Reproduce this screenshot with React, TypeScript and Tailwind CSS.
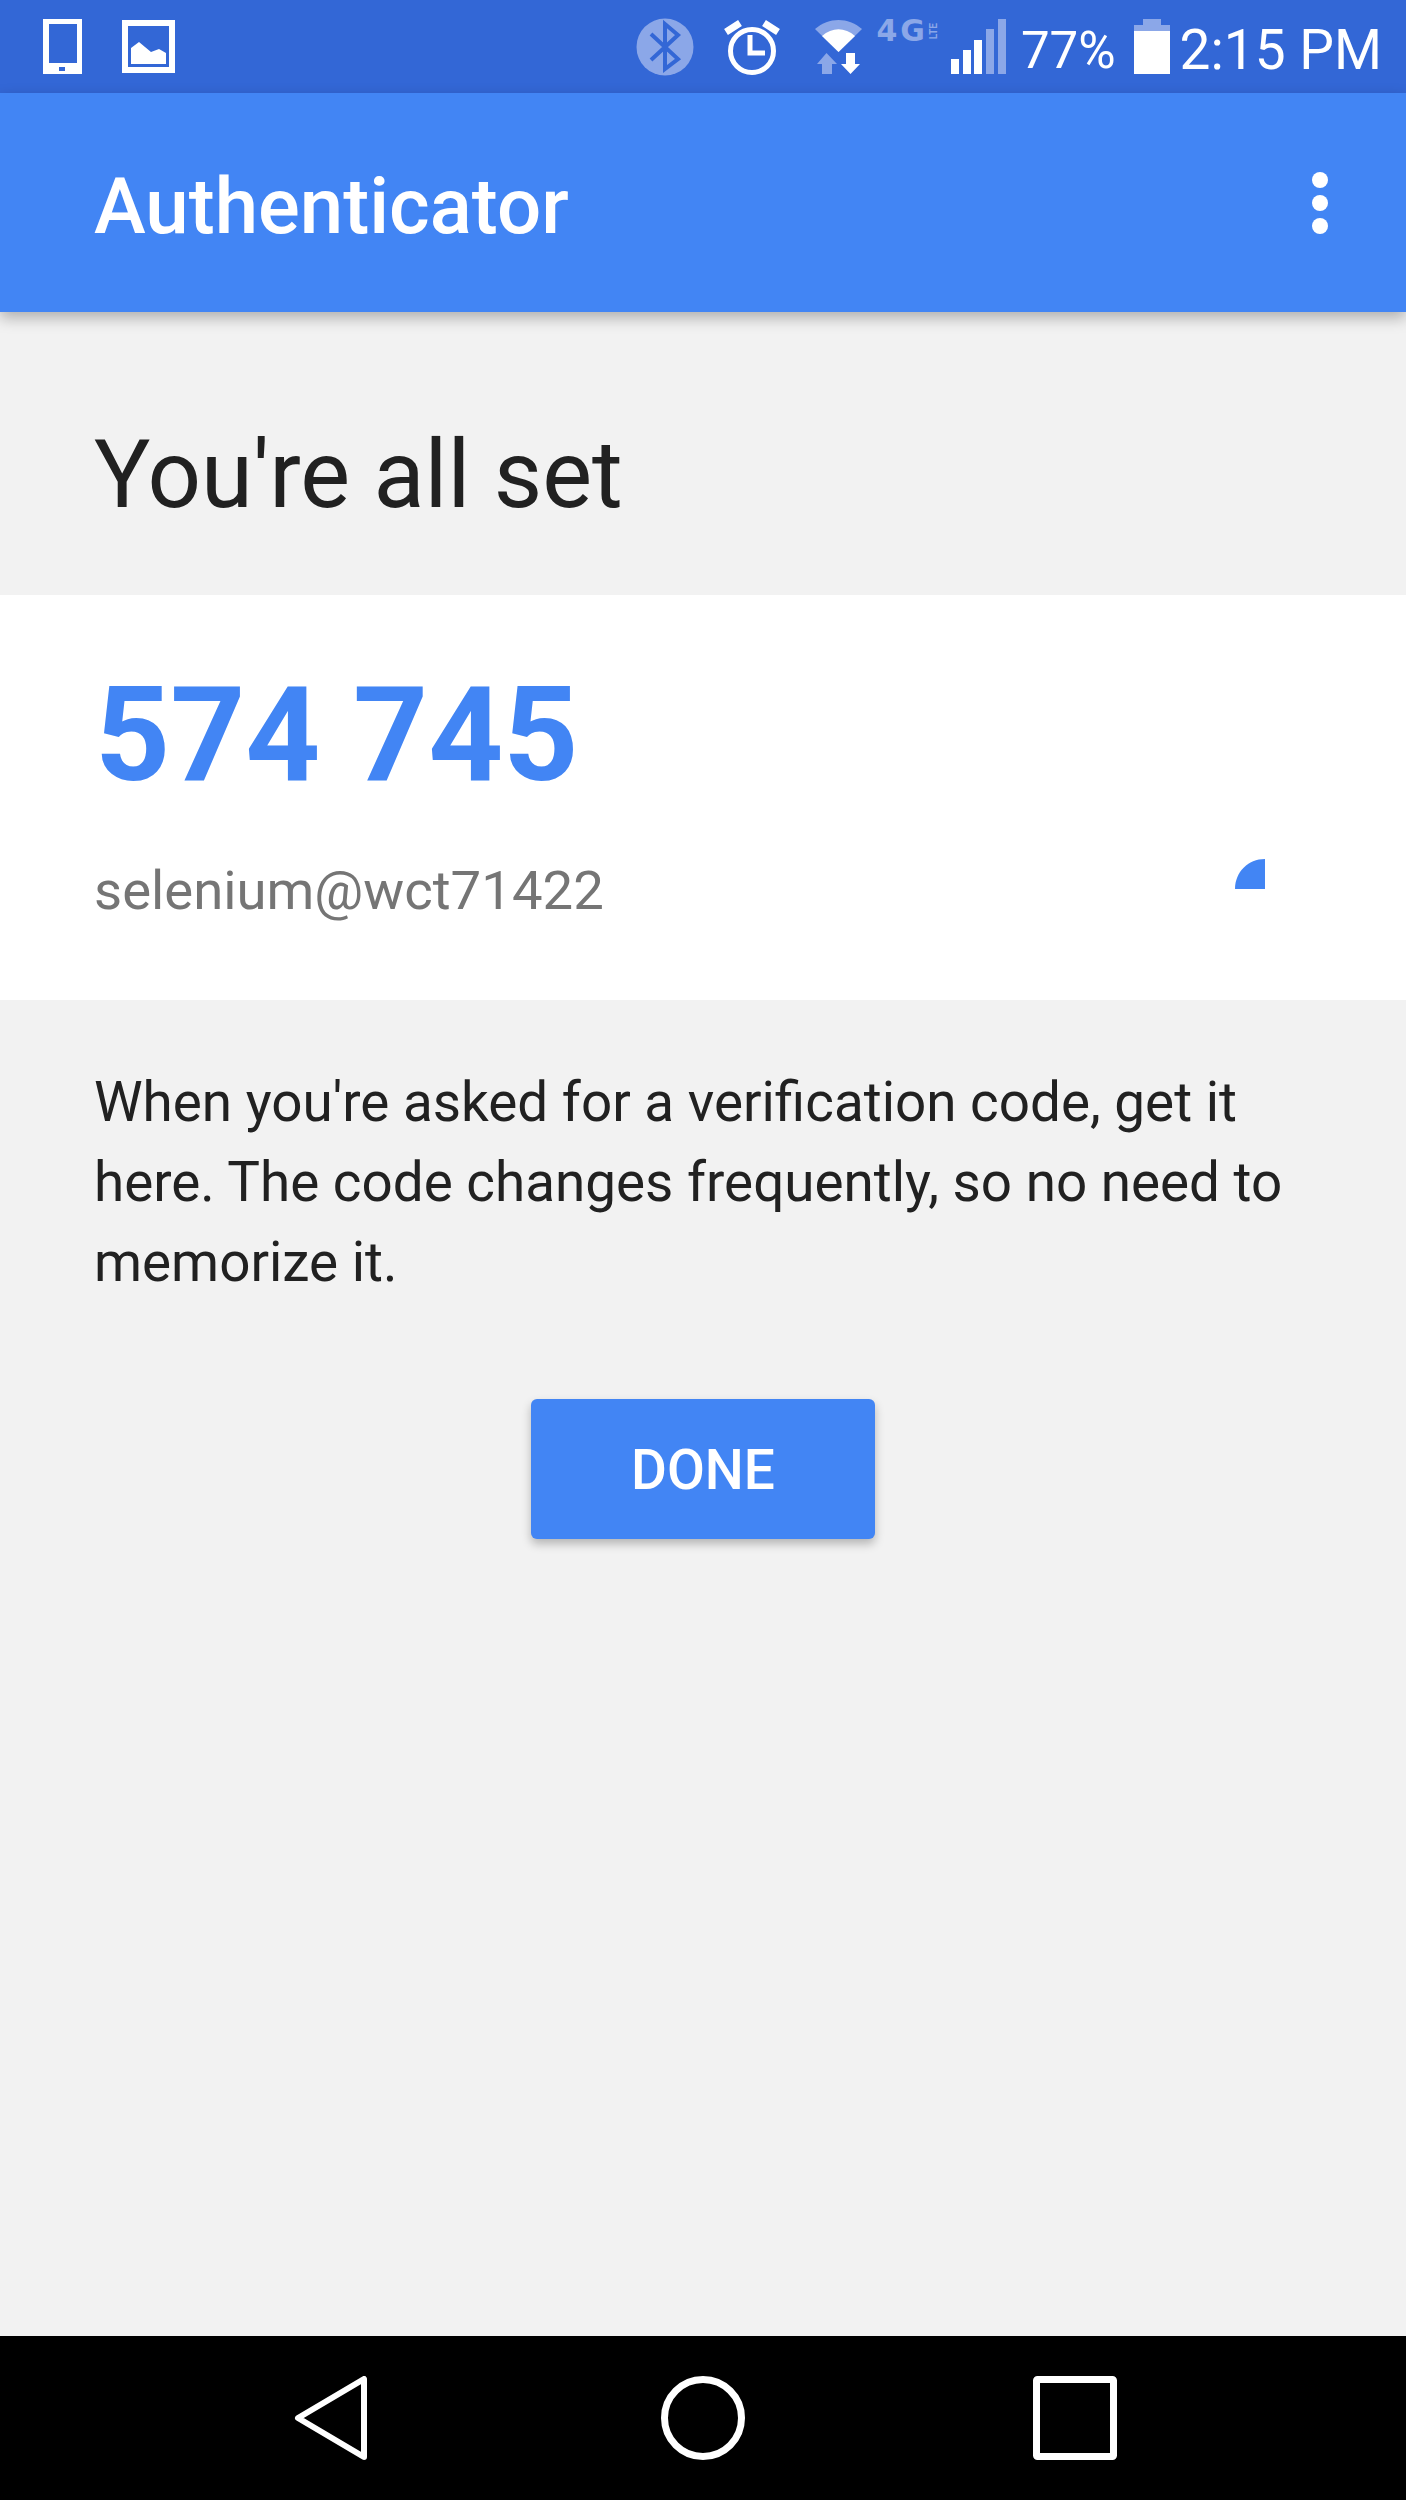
const dim = "#8ba7e8";

function PhoneIcon() {
  return (
    <svg width="39" height="55" viewBox="0 0 39 55" className="block">
      <path fill="#fff" fillRule="evenodd" d="M0 0h39v55H0zM6 5v39h28V5zM16 48v4h6v-4z" />
    </svg>
  );
}

function ImageIcon() {
  return (
    <svg width="54" height="54" viewBox="0 0 54 54" className="block">
      <path fill="#fff" fillRule="evenodd" d="M0 0h53v53H0zM6 6v41h41V6z" />
      <path fill="#fff" d="M9 44V28l8-6 12 10 8-3 7 4v11z" />
    </svg>
  );
}

function BluetoothIcon() {
  return (
    <svg width="58" height="58" viewBox="0 0 58 58" className="block">
      <circle cx="29" cy="29" r="28.5" fill={dim} />
      <path fill="none" stroke="#3367d6" strokeWidth="4" d="M15 16l27 25-13 10V6l13 11-27 25" />
    </svg>
  );
}

function AlarmIcon() {
  return (
    <svg width="56" height="58" viewBox="0 0 56 58" className="block">
      <circle cx="28" cy="33" r="21.5" fill="none" stroke="#fff" strokeWidth="5" />
      <path fill="none" stroke="#fff" strokeWidth="7" d="M2 14L16 5M54 14L40 5" />
      <path fill="none" stroke="#fff" strokeWidth="5" d="M26 17v18h15" />
    </svg>
  );
}

function WifiIcon() {
  return (
    <svg width="48" height="54" viewBox="0 0 48 54" className="block">
      <path fill={dim} d="M0 9C14-3 33-3 47 9L23.5 32z" />
      <path fill="#fff" d="M7 16c10-9 23-9 33 0L23.5 32z" />
      <path fill={dim} d="M11.5 33L2 44h5v10h10V44h5z" />
      <path fill="#fff" d="M31 33v11h-5l9.500 10L45 44h-5V33z" />
    </svg>
  );
}

function NetworkType() {
  return (
    <div className="mb-[31px] ml-[13px] flex h-[23px] items-center text-[#8ba7e8]">
      <span className="font-['DejaVu_Sans',sans-serif] text-[30px] font-bold leading-none tracking-[3px]">4G</span>
      <span className="ml-[1px] rotate-180 font-['Roboto',sans-serif] text-[10px] font-bold leading-none [writing-mode:vertical-rl]">
        LTE
      </span>
    </div>
  );
}

function SignalIcon() {
  return (
    <svg width="56" height="55" viewBox="0 0 56 55" className="block">
      <rect x="0" y="40" width="8" height="15" fill="#fff" />
      <rect x="12" y="31" width="8" height="24" fill="#fff" />
      <rect x="23" y="21" width="8" height="34" fill="#fff" />
      <rect x="35" y="10" width="8" height="45" fill={dim} />
      <rect x="47" y="0" width="8" height="55" fill={dim} />
    </svg>
  );
}

function BatteryIcon() {
  return (
    <svg width="36" height="55" viewBox="0 0 36 55" className="block">
      <rect x="9" y="0" width="18" height="6" fill={dim} />
      <rect x="0" y="6" width="36" height="6" fill={dim} />
      <rect x="0" y="12" width="36" height="43" fill="#fff" />
    </svg>
  );
}

function StatusBar() {
  return (
    <div className="flex h-[93px] shrink-0 items-center justify-between bg-[#3367d6] pl-[43px] pr-[24px] text-white">
      <div className="flex items-center gap-[40px]">
        <PhoneIcon />
        <ImageIcon />
      </div>
      <div className="flex items-center">
        <BluetoothIcon />
        <div className="ml-[30px]">
          <AlarmIcon />
        </div>
        <div className="ml-[35px]">
          <WifiIcon />
        </div>
        <NetworkType />
        <div className="ml-[12px]">
          <SignalIcon />
        </div>
        <span className="ml-[14px] mt-[8px] text-[51px] leading-none">77%</span>
        <div className="ml-[18px]">
          <BatteryIcon />
        </div>
        <span className="ml-[10px] mt-[8px] text-[55px] leading-none">2:15 PM</span>
      </div>
    </div>
  );
}

function AppBar() {
  return (
    <div className="relative z-10 flex h-[219px] shrink-0 items-center justify-between bg-[#4285f4] pl-[94px] pr-[78px] shadow-[0_6px_14px_rgba(0,0,0,0.28)]">
      <h1 className="mt-[8px] text-[78px] font-medium leading-none text-white">Authenticator</h1>
      <div className="flex flex-col gap-[7px]">
        <span className="h-4 w-4 rounded-full bg-white" />
        <span className="h-4 w-4 rounded-full bg-white" />
        <span className="h-4 w-4 rounded-full bg-white" />
      </div>
    </div>
  );
}

function NavBar() {
  return (
    <div className="flex h-[164px] shrink-0 items-center justify-center bg-black pl-[4px]">
      <svg width="74" height="84" viewBox="0 0 74 84" className="mr-[293px] block">
        <path fill="none" stroke="#fff" strokeWidth="6" strokeLinejoin="round" d="M4 42L70 3v78z" />
      </svg>
      <svg width="84" height="84" viewBox="0 0 84 84" className="block">
        <circle cx="42" cy="42" r="38.5" fill="none" stroke="#fff" strokeWidth="7" />
      </svg>
      <svg width="84" height="84" viewBox="0 0 84 84" className="ml-[288px] block">
        <rect x="3.5" y="3.5" width="77" height="77" rx="1" fill="none" stroke="#fff" strokeWidth="7" />
      </svg>
    </div>
  );
}

export default function App() {
  return (
    <div className="flex h-[2500px] w-[1406px] flex-col overflow-hidden bg-[#f2f2f2] font-['Roboto',sans-serif]">
      <StatusBar />
      <AppBar />

      <div className="flex-1">
        <div className="flex h-[283px] items-center px-[94px] pt-[42px]">
          <h2 className="text-[94px] leading-none text-[#212121]">You're all set</h2>
        </div>

        <div className="flex h-[405px] flex-col bg-white px-[94px]">
          <p className="ml-[1px] mt-[75px] text-[131px] font-bold leading-none text-[#4285f4]">574 745</p>
          <div className="mt-[58px] flex items-center justify-between">
            <p className="text-[54.500px] leading-none text-[#757575]">selenium@wct71422</p>
            <svg width="30" height="30" viewBox="0 0 30 30" className="mb-[32px] mr-[47px] block">
              <path fill="#4285f4" d="M30 0v30H0C0 13 13 0 30 0z" />
            </svg>
          </div>
        </div>

        <p className="mt-[62px] px-[94px] text-[54.800px] leading-[80px] text-[#212121]">
          When you're asked for a verification code, get it
          <br />
          here. The code changes frequently, so no need to
          <br />
          memorize it.
        </p>

        <div className="mt-[97px] flex justify-center">
          <button
            type="button"
            className="h-[140px] w-[344px] rounded-[6px] bg-[#4285f4] pt-[3px] text-[55px] font-medium text-white shadow-[0_5px_10px_rgba(0,0,0,0.25)]"
          >
            DONE
          </button>
        </div>
      </div>

      <NavBar />
    </div>
  );
}
